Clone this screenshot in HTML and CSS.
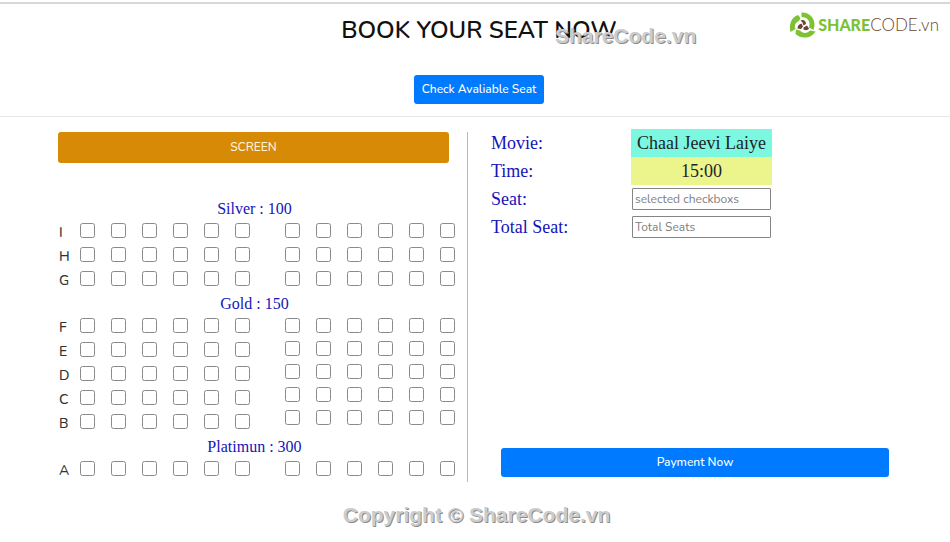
FILE: index.html
```html
<!DOCTYPE html>
<html lang="en">
<head>
<meta charset="utf-8">
<title>Book Your Seat Now</title>
<link rel="stylesheet" href="styles.css">
</head>
<body>
<header class="top">
  <h1 class="title">BOOK YOUR SEAT NOW</h1>
  <button class="btn check" type="button">Check Avaliable Seat</button>
  <div class="logo">
    <svg class="logo-mark" viewBox="0 0 26 26" aria-hidden="true">
      <g fill="#7dc234">
        <path d="M11.500 0.500C19 0 25 6 24.500 13.500L23.500 18L19 15.500C21 9.500 17.500 5 11.500 5z"/>
        <path d="M25.500 19.500C22 26 12 28 5.500 22L6 17.500L10 18.500C12.500 21.500 17 22 20 18.500z"/>
        <path d="M0.500 20C-1.500 12 2 5 8 3L10.500 6L9 9C5 10.500 4 14.500 5.500 17z"/>
      </g>
      <path fill="#6b4630" d="M10.500 8.500C13 7 16 8.500 16 12L13.500 13.500L12.500 10.500zM11.500 11.500L13 14.500L11 17L7.500 16.500C7.500 14 9 12 11.500 11.500zM13.500 15.500L17 13.500L19 16.500C18 18.500 15.500 18.500 13.500 17.500z"/>
    </svg>
    <span class="logo-text"><b>SHARE</b>CODE.vn</span>
  </div>
  <span class="mark mark-top">ShareCode.vn</span>
</header>
<main class="booking">
  <section class="hall">
    <div class="screen">SCREEN</div>
    <div id="seats"></div>
  </section>
  <form class="details">
    <div class="fields">
      <span class="name">Movie:</span><output class="value movie">Chaal Jeevi Laiye</output>
      <span class="name">Time:</span><output class="value time">15:00</output>
      <label class="name" for="seat">Seat:</label><input class="entry" id="seat" type="text" placeholder="selected checkboxs">
      <label class="name" for="total">Total Seat:</label><input class="entry" id="total" type="text" placeholder="Total Seats">
    </div>
    <button class="btn pay" type="button">Payment Now</button>
  </form>
</main>
<footer class="mark foot">Copyright © ShareCode.vn</footer>
<script src="seats.js"></script>
</body>
</html>
```
FILE: styles.css
```css
* {
  box-sizing: border-box;
}

body {
  margin: 0;
  background: #fff;
  color: #212529;
  font-family: Nunito, Lato, sans-serif;
  font-size: 14px;
}

.top {
  position: relative;
  display: flex;
  flex-direction: column;
  align-items: center;
  gap: 29px;
  padding: 11px 0 12px 8px;
  border-top: 2px solid #d8d8d8;
  border-bottom: 1px solid #e8e8e8;
  margin-top: 2px;
}

.title {
  margin: 0;
  font-size: 24px;
  font-weight: 650;
  line-height: 31px;
  color: #111;
}

.btn {
  border: 0;
  border-radius: 3px;
  background: #007bff;
  color: #fff;
  font-family: inherit;
  font-size: 12px;
  font-weight: 500;
  line-height: 29px;
  padding: 0 8px;
}

.logo {
  position: absolute;
  top: 8px;
  right: 11px;
  display: flex;
  align-items: center;
  gap: 2px;
}

.logo-mark {
  width: 26px;
  height: 26px;
}

.logo-text {
  font-family: Lato, sans-serif;
  font-size: 17px;
  font-weight: 300;
  line-height: 20px;
  color: #6b4630;
}

.logo-text b {
  font-size: 16px;
  font-weight: 900;
  color: #7dc234;
}

.mark {
  font-family: "Liberation Sans", sans-serif;
  font-size: 21px;
  font-weight: 700;
  line-height: 24px;
  color: #ccc;
  text-shadow: 1px 1px 0 #8c8c8c;
}

.mark-top {
  position: absolute;
  top: 20px;
  left: 555px;
}

.booking {
  display: grid;
  grid-template-columns: 37fr 38fr;
  padding: 15px 61px 0 58px;
}

.hall {
  border-right: 1px solid #bbb;
  min-height: 350px;
}

.screen {
  margin: 0 18px 34px 0;
  border-radius: 3px;
  background: #d68a05;
  color: #fff3d8;
  font-size: 12px;
  font-weight: 500;
  line-height: 31px;
  text-align: center;
}

.tier {
  margin: 0;
}

.tier-name {
  margin: 0 16px 0 0;
  font-family: "Liberation Serif", serif;
  font-size: 16px;
  font-weight: 400;
  line-height: 23px;
  text-align: center;
  color: #1414b8;
}

.blocks {
  display: flex;
  align-items: flex-start;
  gap: 35px;
}

.row {
  display: flex;
  align-items: flex-start;
  gap: 16px;
  height: 24px;
  padding-top: 3px;
}

.tight .row {
  height: 23px;
}

.letter {
  width: 12px;
  margin-right: -6px;
  padding-left: 1px;
  font-weight: 500;
  line-height: 20px;
  color: #333;
}

.row input {
  width: 15px;
  height: 15px;
  margin: 0;
  opacity: 0.85;
}

.details {
  display: flex;
  flex-direction: column;
  justify-content: space-between;
  padding: 0 0 5px 23px;
}

.fields {
  display: grid;
  grid-template-columns: 140px 141px;
  grid-auto-rows: 28px;
  align-items: center;
  margin-top: -3px;
}

.name,
.value {
  font-family: "Liberation Serif", serif;
  font-size: 18px;
  line-height: 28px;
}

.name {
  color: #1414b8;
}

.value {
  text-align: center;
}

.movie {
  background: #7df8e0;
}

.time {
  background: #ecf48c;
}

.entry {
  height: 22px;
  min-width: 0;
  margin: 0 1px;
  border: 1px solid #858585;
  border-radius: 1px;
  padding: 0 2px;
  font-family: inherit;
  font-size: 12px;
}

.entry::placeholder {
  color: #808080;
}

.pay {
  margin-left: 10px;
}

.foot {
  margin-top: 21px;
  padding-left: 3px;
  text-align: center;
}
```
FILE: seats.js
```js
const tiers = [
  { name: "Silver : 100", rows: ["I", "H", "G"] },
  { name: "Gold : 150", rows: ["F", "E", "D", "C", "B"], tight: true },
  { name: "Platimun : 300", rows: ["A"] }
];

function seatBoxes(row, first) {
  let html = "";
  for (let n = first; n < first + 6; n++) {
    html += `<input type="checkbox" aria-label="${row}${n}" value="${row}${n}">`;
  }
  return html;
}

document.getElementById("seats").innerHTML = tiers.map(t => `
  <section class="tier">
    <h2 class="tier-name">${t.name}</h2>
    <div class="blocks">
      <div>${t.rows.map(r => `<div class="row"><span class="letter">${r}</span>${seatBoxes(r, 1)}</div>`).join("")}</div>
      <div class="${t.tight ? "tight" : ""}">${t.rows.map(r => `<div class="row">${seatBoxes(r, 7)}</div>`).join("")}</div>
    </div>
  </section>`).join("");
```
